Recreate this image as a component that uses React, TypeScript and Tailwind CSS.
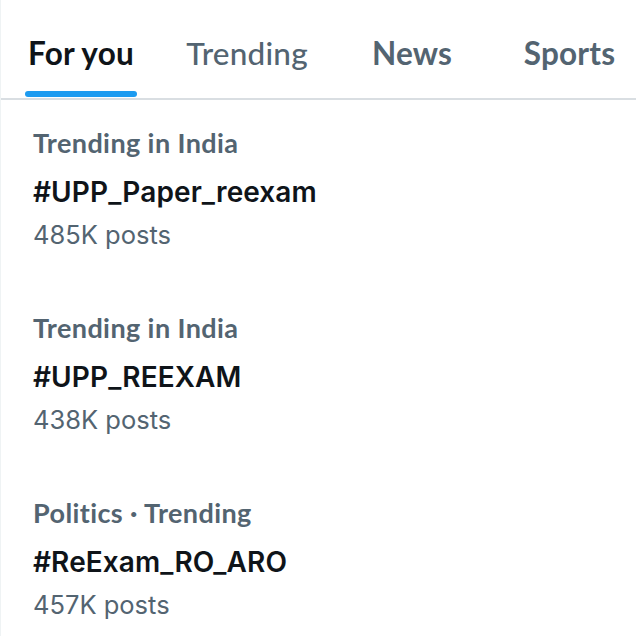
const tabs = [
  { label: "For you", active: true, weight: "font-bold", cell: "ml-[24px] w-[112px]" },
  { label: "Trending", active: false, weight: "font-medium", cell: "w-[220px]" },
  { label: "News", active: false, weight: "font-bold", cell: "w-[110px]" },
  { label: "Sports", active: false, weight: "font-bold", cell: "w-[205px] shrink-0" },
];

const trends = [
  { category: "Trending in India", tag: "#UPP_Paper_reexam", posts: "485K posts" },
  { category: "Trending in India", tag: "#UPP_REEXAM", posts: "438K posts" },
  { category: "Politics · Trending", tag: "#ReExam_RO_ARO", posts: "457K posts" },
];

export default function App() {
  return (
    <div className="h-[636px] w-[636px] overflow-hidden border-l border-[#eff3f4] bg-white">
      <div className="flex h-[100px] overflow-hidden border-b-2 border-[#d9dee2]">
        {tabs.map((t) => (
          <div key={t.label} className={"relative flex shrink-0 flex-col items-center pt-[33px] " + t.cell}>
            <span
              className={
                "whitespace-nowrap font-['Lato',sans-serif] text-[31.5px] leading-[40px] tracking-[0.2px] " +
                t.weight +
                (t.active ? " text-[#0f1419]" : " text-[#536471]")
              }
            >
              {t.label}
            </span>
            {t.active && (
              <div className="absolute bottom-[1px] left-0 h-[6px] w-[112px] rounded-full bg-[#1d9bf0]" />
            )}
          </div>
        ))}
      </div>
      <div className="flex flex-col">
        {trends.map((tr) => (
          <div key={tr.tag} className="flex h-[185px] flex-col pl-[32px] pt-[26px]">
            <div className="font-['Lato',sans-serif] text-[27px] font-bold leading-[34px] tracking-[0.4px] text-[#536471]">
              {tr.category}
            </div>
            <div className="mt-[14px] font-['Inter',sans-serif] text-[28px] font-semibold leading-[36px] tracking-[0.1px] text-[#0f1419]">
              {tr.tag}
            </div>
            <div className="mt-[8px] font-['Inter',sans-serif] text-[25.5px] leading-[34px] text-[#536471]">
              {tr.posts}
            </div>
          </div>
        ))}
      </div>
    </div>
  );
}
